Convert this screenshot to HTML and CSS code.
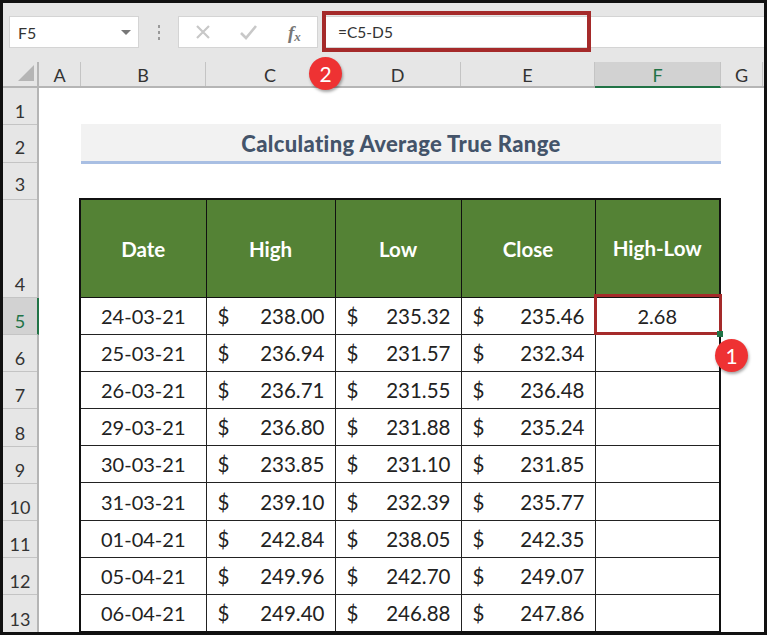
FILE: index.html
```html
<!DOCTYPE html>
<html lang="en">
<head>
<meta charset="utf-8">
<title>Calculating Average True Range</title>
<link rel="stylesheet" href="styles.css">
</head>
<body>
<div class="frame">
  <div class="formula-bar">
    <div class="name-box"><span>F5</span><i class="caret"></i></div>
    <div class="dots"><i></i><i></i><i></i></div>
    <div class="fx-box">
      <svg class="tool" width="18" height="18" viewBox="0 0 18 18"><path d="M3 3 15 15M15 3 3 15" stroke="#c8c8c8" stroke-width="2.2" fill="none"/></svg>
      <svg class="tool" width="20" height="18" viewBox="0 0 20 18"><path d="M2 10 7 15 17 3" stroke="#c8c8c8" stroke-width="2.6" fill="none"/></svg>
      <span class="fx">f<sub>x</sub></span>
    </div>
    <div class="formula-input"><span class="formula-text">=C5-D5</span></div>
  </div>
  <div class="col-heads">
    <div class="corner"><i></i></div>
    <div class="col ca">A</div>
    <div class="col cb">B</div>
    <div class="col cc">C</div>
    <div class="col cd">D</div>
    <div class="col ce">E</div>
    <div class="col cf selected">F</div>
    <div class="col cg">G</div>
  </div>
  <div class="sheet">
    <div class="row-heads">
      <div class="rh h37">1</div>
      <div class="rh h37 raised">2</div>
      <div class="rh h37 raised">3</div>
      <div class="rh h98">4</div>
      <div class="rh selected">5</div>
      <div class="rh">6</div>
      <div class="rh">7</div>
      <div class="rh">8</div>
      <div class="rh">9</div>
      <div class="rh">10</div>
      <div class="rh">11</div>
      <div class="rh">12</div>
      <div class="rh">13</div>
    </div>
    <div class="content">
      <div class="title">Calculating Average True Range</div>
      <table class="data">
        <colgroup><col class="w-b"><col class="w-c"><col class="w-d"><col class="w-e"><col class="w-f"></colgroup>
        <thead><tr><th>Date</th><th>High</th><th>Low</th><th>Close</th><th class="up">High-Low</th></tr></thead>
        <tbody>
          <tr><td class="date">24-03-21</td><td><div class="acc"><span>$</span><span>238.00</span></div></td><td><div class="acc"><span>$</span><span>235.32</span></div></td><td><div class="acc"><span>$</span><span>235.46</span></div></td><td class="date">2.68</td></tr>
          <tr><td class="date">25-03-21</td><td><div class="acc"><span>$</span><span>236.94</span></div></td><td><div class="acc"><span>$</span><span>231.57</span></div></td><td><div class="acc"><span>$</span><span>232.34</span></div></td><td></td></tr>
          <tr><td class="date">26-03-21</td><td><div class="acc"><span>$</span><span>236.71</span></div></td><td><div class="acc"><span>$</span><span>231.55</span></div></td><td><div class="acc"><span>$</span><span>236.48</span></div></td><td></td></tr>
          <tr><td class="date">29-03-21</td><td><div class="acc"><span>$</span><span>236.80</span></div></td><td><div class="acc"><span>$</span><span>231.88</span></div></td><td><div class="acc"><span>$</span><span>235.24</span></div></td><td></td></tr>
          <tr><td class="date">30-03-21</td><td><div class="acc"><span>$</span><span>233.85</span></div></td><td><div class="acc"><span>$</span><span>231.10</span></div></td><td><div class="acc"><span>$</span><span>231.85</span></div></td><td></td></tr>
          <tr><td class="date">31-03-21</td><td><div class="acc"><span>$</span><span>239.10</span></div></td><td><div class="acc"><span>$</span><span>232.39</span></div></td><td><div class="acc"><span>$</span><span>235.77</span></div></td><td></td></tr>
          <tr><td class="date">01-04-21</td><td><div class="acc"><span>$</span><span>242.84</span></div></td><td><div class="acc"><span>$</span><span>238.05</span></div></td><td><div class="acc"><span>$</span><span>242.35</span></div></td><td></td></tr>
          <tr><td class="date">05-04-21</td><td><div class="acc"><span>$</span><span>249.96</span></div></td><td><div class="acc"><span>$</span><span>242.70</span></div></td><td><div class="acc"><span>$</span><span>249.07</span></div></td><td></td></tr>
          <tr><td class="date">06-04-21</td><td><div class="acc"><span>$</span><span>249.40</span></div></td><td><div class="acc"><span>$</span><span>246.88</span></div></td><td><div class="acc"><span>$</span><span>247.86</span></div></td><td></td></tr>
        </tbody>
      </table>
    </div>
  </div>
  <div class="red-box box-formula"></div>
  <div class="red-box box-cell"></div>
  <div class="handle"></div>
  <div class="badge badge-2">2</div>
  <div class="badge badge-1">1</div>
</div>
</body>
</html>
```
FILE: styles.css
```css
* { box-sizing: border-box; }
html, body { margin: 0; padding: 0; }
body { width: 767px; height: 635px; overflow: hidden; background: #fff; font-family: Lato, "Liberation Sans", sans-serif; color: #222; }
.frame { position: relative; width: 767px; height: 635px; border: 3px solid #111; background: #fff; overflow: hidden; }

.formula-bar { display: flex; align-items: stretch; height: 59px; padding-top: 13px; padding-bottom: 11px; padding-left: 6px; background: #e6e6e6; border-bottom: 0; }
.name-box { width: 130px; height: 32px; background: #fff; border: 1px solid #d4d4d4; display: flex; align-items: center; justify-content: space-between; padding: 0 7px 0 8px; font-size: 16px; color: #333; }
.caret { width: 0; height: 0; border-left: 5px solid transparent; border-right: 5px solid transparent; border-top: 5px solid #777; }
.dots { width: 39px; height: 32px; display: flex; flex-direction: column; align-items: center; justify-content: center; gap: 3px; }
.dots i { width: 2px; height: 3px; background: #999; }
.fx-box { width: 140px; height: 32px; background: #fff; border: 1px solid #d4d4d4; display: flex; align-items: center; padding-left: 15px; gap: 27px; }
.tool { flex: none; }
.fx { font-family: "Liberation Serif", serif; font-style: italic; font-weight: bold; font-size: 19px; color: #777; margin-left: 2px; line-height: 1; }
.fx sub { font-size: 13px; vertical-align: -2px; line-height: 0; }
.formula-input { flex: 1; height: 32px; margin-left: 5px; background: #fff; border-top: 1px solid #d4d4d4; border-bottom: 1px solid #d4d4d4; display: flex; align-items: center; padding-left: 15px; font-size: 15.5px; color: #333; }

.col-heads { display: flex; height: 26px; background: #e6e6e6; border-bottom: 2px solid #b5b5b5; }
.corner { position: relative; width: 36px; border-right: 2px solid #b5b5b5; }
.corner i { position: absolute; right: 3px; bottom: 5px; width: 0; height: 0; border-left: 16px solid transparent; border-bottom: 16px solid #b5b5b5; }
.col { display: flex; align-items: center; justify-content: center; font-size: 18px; color: #333; border-right: 1px solid #c4c4c4; padding-top: 1px; }
.ca { width: 42px; }
.cb { width: 125px; }
.cc { width: 129px; }
.cd { width: 126px; }
.ce { width: 134px; }
.cf { width: 126px; }
.cg { width: 42px; border-right: 1px solid #c4c4c4; }
.col.selected { background: #d2d2d2; color: #217346; border-bottom: 2px solid #217346; height: 26px; }

.sheet { display: flex; }
.row-heads { width: 36px; background: #e6e6e6; border-right: 2px solid #b5b5b5; display: flex; flex-direction: column; }
.rh { height: 37.2px; display: flex; align-items: flex-end; justify-content: center; font-size: 18px; color: #333; border-bottom: 1px solid #c4c4c4; padding-bottom: 2px; }
.rh.h37 { height: 37.3px; }
.rh.raised { padding-bottom: 4px; }
.rh.h98 { height: 98px; }
.rh.selected { background: #d2d2d2; color: #217346; border-right: 2px solid #217346; margin-right: -2px; }

.content { padding-left: 42px; padding-top: 36px; }
.title { width: 640px; height: 40px; padding-top: 1px; background: #f2f2f2; border-bottom: 3px solid #a9bfe3; color: #44546a; font-weight: 900; font-size: 22px; letter-spacing: .35px; display: flex; align-items: center; justify-content: center; }

.data { margin-top: 34px; margin-left: -2px; border-collapse: collapse; table-layout: fixed; width: 640px; border: 2px solid #111; }
.w-b { width: 126px; }
.w-c { width: 129px; }
.w-d { width: 126px; }
.w-e { width: 134px; }
.w-f { width: 125px; }
.data th { height: 98px; background: #548235; color: #fff; font-size: 20.5px; font-weight: bold; border: 1px solid #111; padding: 2px 0 0; }
.data th.up { padding: 0 0 1px; }
.data td { height: 37.2px; padding: 0; border: 1px solid #222; font-size: 20.5px; color: #222; }
.data td.date { text-align: center; font-size: 20px; }
.acc { display: flex; justify-content: space-between; padding: 0 10px 0 11px; }

.red-box { position: absolute; border: 4px solid #a52a2a; background: transparent; }
.box-formula { left: 319px; top: 8px; width: 269px; height: 41px; }
.box-cell { left: 591px; top: 291px; width: 128px; height: 41px; border-width: 3px; }
.handle { position: absolute; left: 714px; top: 328px; width: 6px; height: 6px; background: #217346; }
.badge { position: absolute; width: 33px; height: 33px; border-radius: 50%; background: #ee3233; color: #fff; font-size: 21px; display: flex; align-items: center; justify-content: center; box-shadow: 1px 2px 3px rgba(0,0,0,.35); }
.badge-2 { left: 306px; top: 54px; }
.badge-1 { left: 712px; top: 336px; }
```
